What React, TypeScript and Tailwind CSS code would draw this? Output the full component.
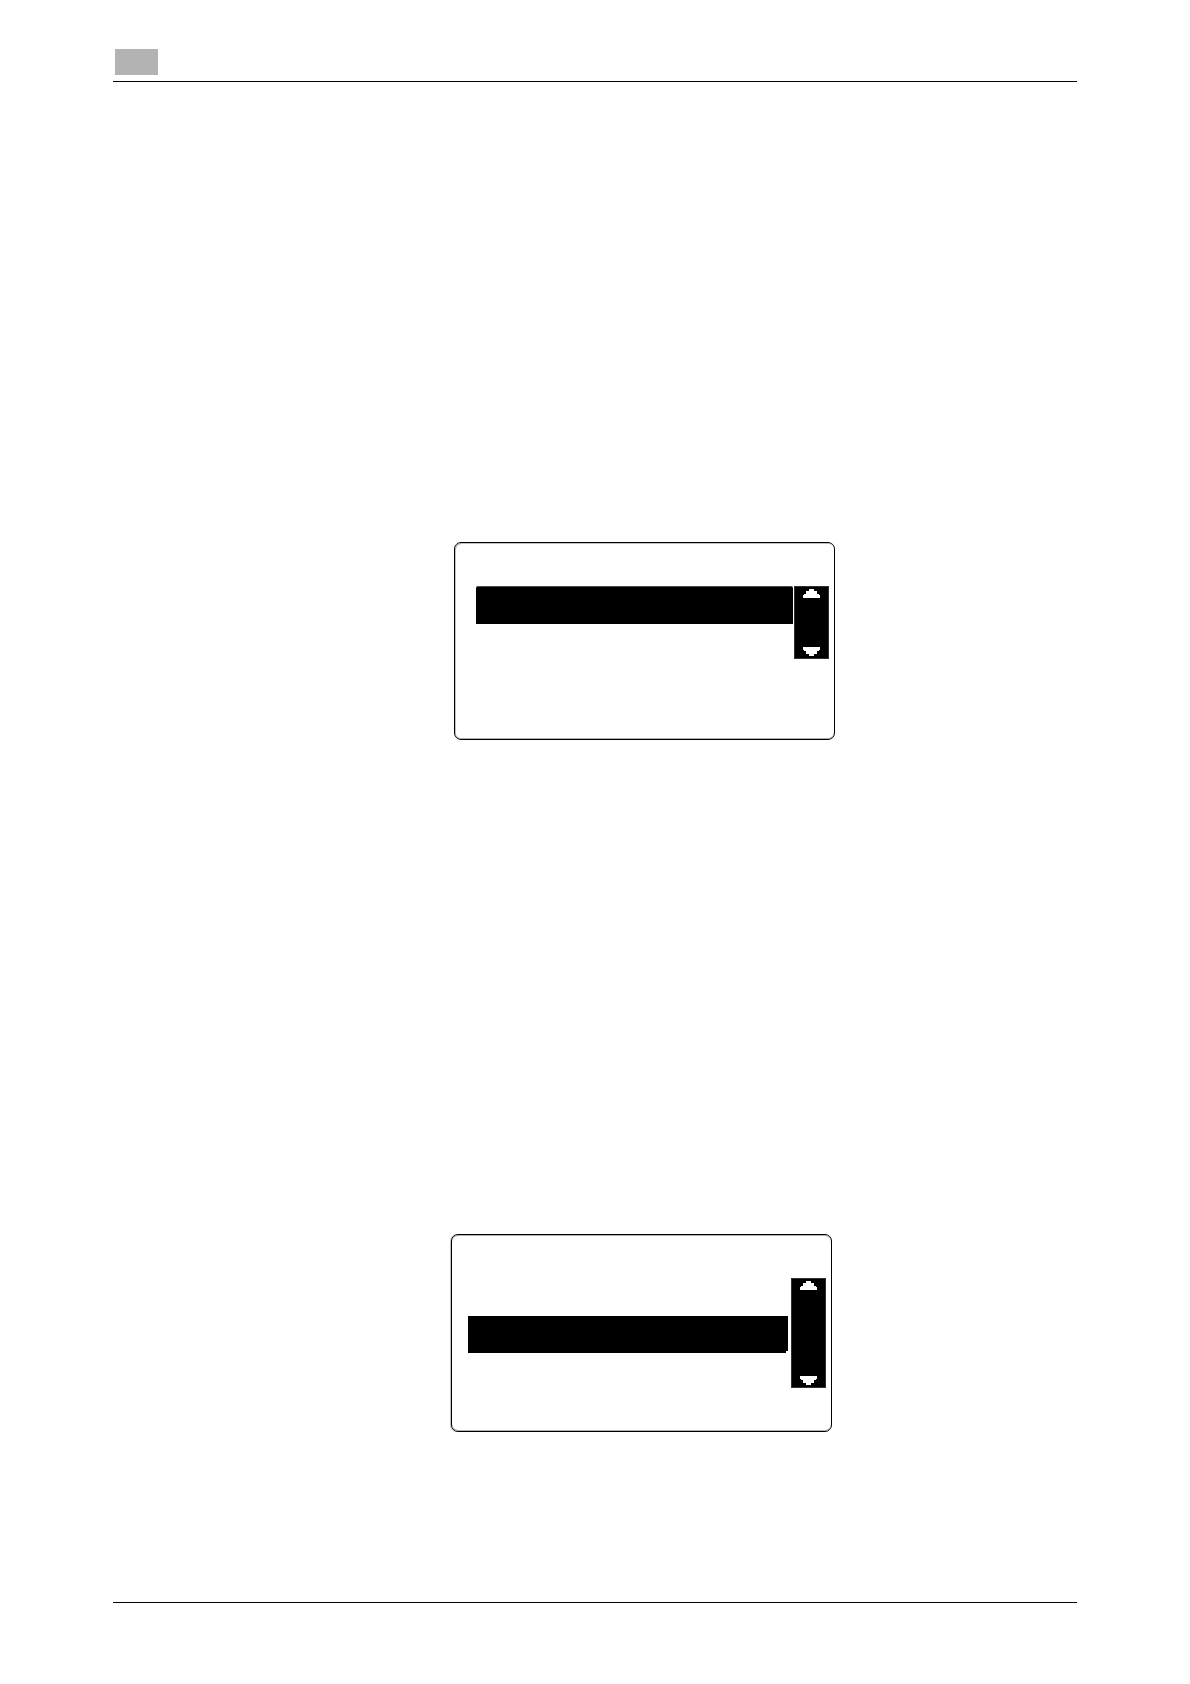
import React from "react";

function Arrow({ down = false }: { down?: boolean }) {
  return (
    <svg
      width="17"
      height="9"
      viewBox="0 0 17 9"
      fill="#ffffff"
      shapeRendering="crispEdges"
      aria-hidden="true"
      className={down ? "block -scale-y-100" : "block"}
    >
      <path d="M6 0h5v2h3v3h2v1h1v3H0V6h1V5h2V2h3z" />
    </svg>
  );
}

function Scroller({ height }: { height: string }) {
  return (
    <div
      className={`flex w-[35px] shrink-0 flex-col items-center justify-between border border-[#303030] bg-black py-0.5 ${height}`}
    >
      <button type="button" aria-label="Scroll up" className="block">
        <Arrow />
      </button>
      <button type="button" aria-label="Scroll down" className="block">
        <Arrow down />
      </button>
    </div>
  );
}

function Screen({ className, children }: { className: string; children: React.ReactNode }) {
  return (
    <section
      className={`flex h-[198px] w-[381px] items-start rounded-[7px] border border-black pt-[43px] ${className}`}
    >
      {children}
    </section>
  );
}

export default function App() {
  return (
    <div className="flex min-h-screen flex-col bg-white px-[113px] font-['Liberation_Sans',sans-serif]">
      <header className="border-b border-black pt-[49px] pb-1.5">
        <div className="ml-0.5 h-[26px] w-[43px] bg-[#b3b3b3]" />
      </header>
      <main className="flex grow flex-col pt-[460px]">
        <Screen className="ml-[341px] pr-[5px] pl-[21px] shadow-[inset_1px_1px_0_#c0c0c0,inset_0_-1px_0_#b0b0b0]">
          <div className="mr-px h-[38px] grow rounded-tl-[2px] rounded-tr-[2px] border-t border-[#4a4a4a] bg-black" />
          <Scroller height="h-[73px]" />
        </Screen>
        <Screen className="mt-[494px] ml-[338px] pr-[5px] pl-4 shadow-[inset_0_1px_0_#b0b0b0,inset_0_-1px_0_#b0b0b0,-1px_0_0_#c0c0c0]">
          <div className="mt-[38px] mr-[3px] flex h-[37px] grow">
            <div className="grow bg-black" />
            <div className="h-[35px] w-0.5 bg-black" />
          </div>
          <Scroller height="h-[110px]" />
        </Screen>
      </main>
      <footer className="h-[82px] border-t border-black" />
    </div>
  );
}
